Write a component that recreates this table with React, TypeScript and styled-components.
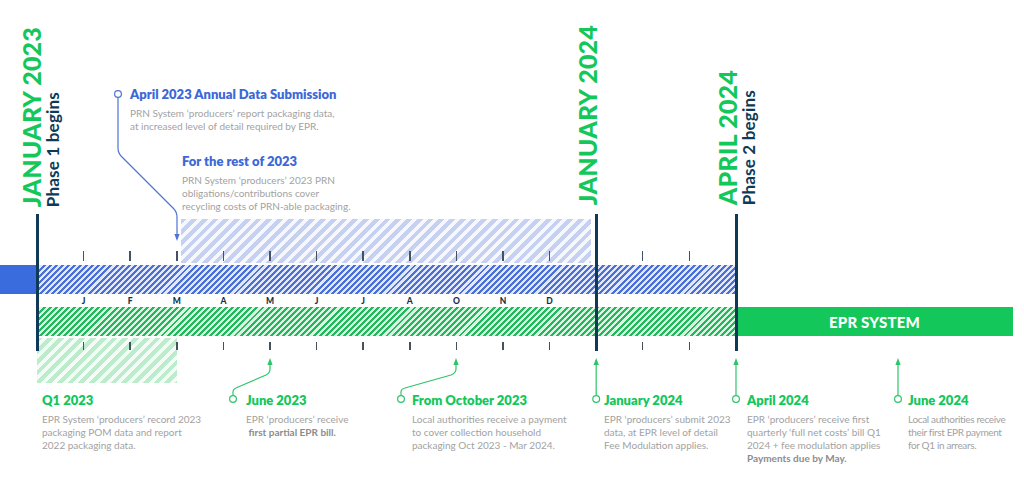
import React, { FC } from "react";
import styled, { createGlobalStyle } from "styled-components";

const GREEN = "#13c75a";
const BLUE = "#3d68d8";
const NAVY = "#0e3a58";
const GREY = "#a2a2a2";

const UNIT = 46.6;
const X = (k: number) => 37 + UNIT * k;

const GlobalStyle = createGlobalStyle`
  html, body {
    margin: 0;
    padding: 0;
    background: #ffffff;
  }
  body {
    font-family: Lato, "Open Sans", sans-serif;
  }
`;

const Canvas = styled.div`
  position: relative;
  width: 1024px;
  height: 492px;
  overflow: hidden;
  background: #ffffff;
`;

/* ---------- milestones: vertical heading + stem ---------- */

const Milestone = styled.div<{ $left: number }>`
  position: absolute;
  left: ${(p) => p.$left}px;
  bottom: 141px;
  display: flex;
  flex-direction: column;
  align-items: flex-start;
`;

const Heading = styled.div`
  writing-mode: vertical-rl;
  transform: rotate(180deg);
`;

const DateLabel = styled.div`
  color: ${GREEN};
  font-size: 25px;
  font-weight: 900;
  line-height: 21px;
  letter-spacing: 0.2px;
  white-space: nowrap;
`;

const PhaseLabel = styled.div`
  color: ${NAVY};
  font-size: 17px;
  font-weight: 700;
  line-height: 14px;
  letter-spacing: 0.2px;
  white-space: nowrap;
  margin-block-start: 4px;
`;

const Stem = styled.div<{ $offset: number; $gap: number }>`
  width: 3px;
  height: 137px;
  margin-left: ${(p) => p.$offset}px;
  margin-top: ${(p) => p.$gap}px;
  background: ${NAVY};
`;

/* ---------- callouts ---------- */

const Callout = styled.div<{ $left: number; $top: number }>`
  position: absolute;
  left: ${(p) => p.$left}px;
  top: ${(p) => p.$top}px;
  display: flex;
  flex-direction: column;
  gap: 6px;
`;

const Title = styled.div<{ $tone: "blue" | "green" }>`
  color: ${(p) => (p.$tone === "blue" ? BLUE : GREEN)};
  font-size: 13px;
  font-weight: 800;
  line-height: 14px;
  white-space: nowrap;
`;

const Desc = styled.div<{ $tight?: boolean }>`
  color: ${GREY};
  font-size: 10px;
  line-height: 13px;
  white-space: nowrap;
  letter-spacing: ${(p) => (p.$tight ? "-0.35px" : "0")};

  b {
    color: #8c8c8c;
    font-weight: 700;
  }
`;

/* ---------- track ---------- */

const Track = styled.div`
  position: absolute;
  left: 0;
  top: 219px;
  width: 1024px;
  display: flex;
  flex-direction: column;
`;

const Lane = styled.div<{ $h: number; $pad: number; $top?: number }>`
  position: relative;
  height: ${(p) => p.$h}px;
  padding-left: ${(p) => p.$pad}px;
  padding-top: ${(p) => p.$top ?? 0}px;
  box-sizing: border-box;
`;

const LightBand = styled.div<{ $w: number; $h: number; $tone: "blue" | "green" }>`
  width: ${(p) => p.$w}px;
  height: ${(p) => p.$h}px;
  background: ${(p) =>
    p.$tone === "blue"
      ? "repeating-linear-gradient(135deg, #c6d1f2 0 4px, #f6f8fe 4px 7.6px)"
      : "repeating-linear-gradient(135deg, #bdeccc 0 4px, #f4fcf7 4px 7.6px)"};
`;

const Row = styled.div`
  display: flex;
  height: 29px;
`;

const Solid = styled.div<{ $w: number; $color: string }>`
  width: ${(p) => p.$w}px;
  background: ${(p) => p.$color};
`;

const Spacer = styled.div<{ $w: number }>`
  width: ${(p) => p.$w}px;
`;

const Hatch = styled.div<{ $tone: "blue" | "green" }>`
  width: ${X(15) - X(0)}px;
  background: ${(p) =>
    p.$tone === "blue"
      ? "repeating-linear-gradient(135deg, #4b70d9 0 2.1px, #e2e8f8 2.1px 4.3px)"
      : "repeating-linear-gradient(135deg, #20b95c 0 2.1px, #ddf4e5 2.1px 4.3px)"};
`;

const EprBand = styled.div`
  width: 277px;
  background: ${GREEN};
  color: #ffffff;
  font-size: 15px;
  font-weight: 900;
  display: flex;
  align-items: center;
  justify-content: center;
  letter-spacing: 0.2px;
`;

const MonthRow = styled.div`
  display: flex;
  height: 13px;
  padding-left: ${X(0.5)}px;
  align-items: center;
`;

const Cell = styled.div`
  width: ${UNIT}px;
  flex: none;
  display: flex;
  justify-content: center;
`;

const Month = styled.span`
  color: #12304a;
  font-size: 8.5px;
  font-weight: 900;
`;

const TickRow = styled.div<{ $top: number }>`
  position: absolute;
  left: ${X(0.5)}px;
  top: ${(p) => p.$top}px;
  display: flex;
`;

const Tick = styled.div<{ $h: number }>`
  width: 1.5px;
  height: ${(p) => p.$h}px;
  background: #43525f;
`;

const Connectors = styled.svg`
  position: absolute;
  left: 0;
  top: 0;
  pointer-events: none;
`;

const months = ["J", "F", "M", "A", "M", "J", "J", "A", "O", "N", "D"];
const tickSlots = [...months.map(() => true), false, true, true];

const Ticks: FC<{ top: number; h: number }> = ({ top, h }) => (
  <TickRow $top={top}>
    {tickSlots.map((on, i) => (
      <Cell key={i}>{on && <Tick $h={h} />}</Cell>
    ))}
  </TickRow>
);

const up = (x: number, y: number) =>
  `${x},${y} ${x - 2.6},${y + 7} ${x + 2.6},${y + 7}`;
const down = (x: number, y: number) =>
  `${x},${y} ${x - 2.6},${y - 7} ${x + 2.6},${y - 7}`;

type MilestoneProps = {
  left: number;
  k: number;
  gap: number;
  date: string;
  phase?: string;
};

const MilestoneMark: FC<MilestoneProps> = ({ left, k, gap, date, phase }) => (
  <Milestone $left={left}>
    <Heading>
      <DateLabel>{date}</DateLabel>
      {phase && <PhaseLabel>{phase}</PhaseLabel>}
    </Heading>
    <Stem $offset={X(k) - 1.5 - left} $gap={gap} />
  </Milestone>
);

const App: FC = () => {
  const greenLinks = [
    "M233 395.5 V392 Q233 389 237 387.5 L266 375 Q270 373 270 369 V364",
    "M401 395.5 V392 Q401 389 405 388 L451 375 Q456 373 456 369 V364",
    `M${X(12)} 395.5 V364`,
    `M${X(15)} 395.5 V364`,
    "M898 395.5 V364",
  ];
  const arrowsUp = [270, 456, X(12), X(15), 898];
  const circles = [233, 401, X(12), X(15), 898];

  return (
    <Canvas>
      <GlobalStyle />

      <Callout $left={130} $top={87}>
        <Title $tone="blue">April 2023 Annual Data Submission</Title>
        <Desc>
          PRN System ‘producers’ report packaging data,
          <br />
          at increased level of detail required by EPR.
        </Desc>
      </Callout>
      <Callout $left={182} $top={154}>
        <Title $tone="blue">For the rest of 2023</Title>
        <Desc>
          PRN System ‘producers’ 2023 PRN
          <br />
          obligations/contributions cover
          <br />
          recycling costs of PRN-able packaging.
        </Desc>
      </Callout>

      <Track>
        <Lane $h={46} $pad={181}>
          <LightBand $w={410} $h={44} $tone="blue" />
          <Ticks top={32} h={10} />
        </Lane>
        <Row>
          <Solid $w={X(0)} $color="#3a6cde" />
          <Hatch $tone="blue" />
        </Row>
        <MonthRow>
          {months.map((m, i) => (
            <Cell key={i}>
              <Month>{m}</Month>
            </Cell>
          ))}
        </MonthRow>
        <Row>
          <Spacer $w={X(0)} />
          <Hatch $tone="green" />
          <EprBand>EPR SYSTEM</EprBand>
        </Row>
        <Lane $h={47} $pad={X(0)} $top={2}>
          <LightBand $w={140} $h={45} $tone="green" />
          <Ticks top={6} h={8} />
        </Lane>
      </Track>

      <MilestoneMark left={21} k={0} gap={7} date="JANUARY 2023" phase="Phase 1 begins" />
      <MilestoneMark left={577} k={12} gap={9} date="JANUARY 2024" />
      <MilestoneMark left={717} k={15} gap={9} date="APRIL 2024" phase="Phase 2 begins" />

      <Connectors width={1024} height={492} viewBox="0 0 1024 492">
        <circle cx={118} cy={94} r={3.4} fill="#fff" stroke="#4f73d6" strokeWidth={1.2} />
        <path
          d="M118 97.5 V148 Q118 153 121.5 156.5 L173.5 208.5 Q177 212 177 217 V235"
          fill="none"
          stroke="#4f73d6"
          strokeWidth={1.2}
        />
        <polygon points={down(177, 241)} fill="#4f73d6" />

        {greenLinks.map((d) => (
          <path key={d} d={d} fill="none" stroke="#2ec46a" strokeWidth={1.2} />
        ))}
        {arrowsUp.map((x) => (
          <polygon key={x} points={up(x, 358)} fill="#2ec46a" />
        ))}
        {circles.map((x) => (
          <circle key={x} cx={x} cy={399} r={3.4} fill="#fff" stroke="#2ec46a" strokeWidth={1.2} />
        ))}
      </Connectors>

      <Callout $left={42} $top={393}>
        <Title $tone="green">Q1 2023</Title>
        <Desc>
          EPR System ‘producers’ record 2023
          <br />
          packaging POM data and report
          <br />
          2022 packaging data.
        </Desc>
      </Callout>
      <Callout $left={246} $top={393}>
        <Title $tone="green">June 2023</Title>
        <Desc>
          EPR ‘producers’ receive
          <br />
          <b>&nbsp;first partial EPR bill.</b>
        </Desc>
      </Callout>
      <Callout $left={412} $top={393}>
        <Title $tone="green">From October 2023</Title>
        <Desc>
          Local authorities receive a payment
          <br />
          to cover collection household
          <br />
          packaging Oct 2023 - Mar 2024.
        </Desc>
      </Callout>
      <Callout $left={604} $top={393}>
        <Title $tone="green">January 2024</Title>
        <Desc>
          EPR ‘producers’ submit 2023
          <br />
          data, at EPR level of detail
          <br />
          Fee Modulation applies.
        </Desc>
      </Callout>
      <Callout $left={747} $top={393}>
        <Title $tone="green">April 2024</Title>
        <Desc>
          EPR ‘producers’ receive first
          <br />
          quarterly ‘full net costs’ bill Q1
          <br />
          2024 + fee modulation applies
          <br />
          <b>Payments due by May.</b>
        </Desc>
      </Callout>
      <Callout $left={908} $top={393}>
        <Title $tone="green">June 2024</Title>
        <Desc $tight>
          Local authorities receive
          <br />
          their first EPR payment
          <br />
          for Q1 in arrears.
        </Desc>
      </Callout>
    </Canvas>
  );
};

export default App;
